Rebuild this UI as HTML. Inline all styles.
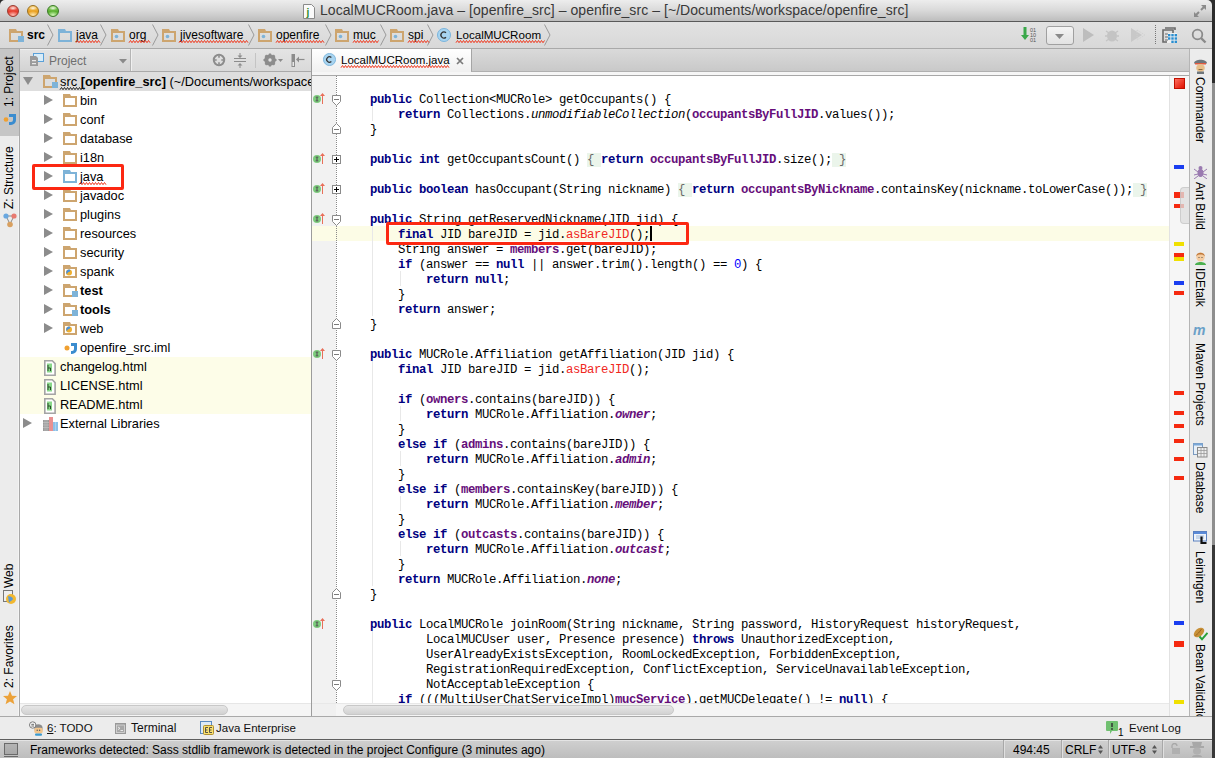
<!DOCTYPE html><html><head><meta charset="utf-8"><style>
*{margin:0;padding:0;box-sizing:border-box}
html,body{width:1215px;height:758px;overflow:hidden;background:#e8e8e8;font-family:"Liberation Sans",sans-serif;font-size:12px;color:#000;position:relative}
.a{position:absolute}
svg{display:block}
#title{left:0;top:0;width:1215px;height:22px;background:linear-gradient(#ededed,#d9d9d9 50%,#bdbdbd);border-bottom:1px solid #5a5a5a}
.tl{position:absolute;top:5px;width:12px;height:12px;border-radius:50%}
#ttext{position:absolute;left:320px;top:2px;font-size:14px;color:#383838;white-space:pre;letter-spacing:0.06px}
#nav{left:0;top:22px;width:1215px;height:27px;background:linear-gradient(#e2e2e2,#d8d8d8);border-bottom:1px solid #a9a9a9}
.nt{position:absolute;top:27px;font-size:12px;line-height:16px;white-space:pre}
.wv{}
.vt{position:absolute;white-space:pre;font-size:12px;line-height:14px;transform-origin:0 0}
.vl{transform:rotate(-90deg)}
.vr{transform:rotate(90deg)}
.tt{position:absolute;white-space:pre;font-size:12.8px;line-height:18px}
.tt.b{font-weight:bold}
.cl{position:absolute;left:58px;height:15px;line-height:15px;font-family:"Liberation Mono",monospace;font-size:12.3px;letter-spacing:-0.38px;white-space:pre;color:#000}
.cl b.k{color:#000080;font-weight:bold}
.cl b.f{color:#660e7a;font-weight:bold}
.cl b.e{color:#660e7a;font-weight:bold;font-style:italic}
.cl .r{color:#f0281e}
.cl .n{color:#0000ff}
.cl .fb{background:#ebf5eb;color:#6a6a6a}
.bt{position:absolute;top:720px;font-size:12px;line-height:16px;white-space:pre;color:#111}
.st{position:absolute;top:742px;font-size:12px;line-height:16px;white-space:pre;color:#000}
.ssep{position:absolute;top:740px;width:1px;height:18px;background:#a8a8a8;box-shadow:1px 0 0 #e0e0e0}
.guide{position:absolute;width:1px;background:#e8e8e8}
.mk{position:absolute;left:1174px;width:10px;height:4px}
</style></head><body>
<div class="a" style="left:0;top:0;width:6px;height:6px;background:#2a2a2a"></div><div class="a" style="left:1206px;top:0;width:6px;height:6px;background:#2a2a2a"></div>
<div id="title" class="a" style="border-radius:5px 5px 0 0;width:1212px">
<div class="tl" style="left:7px;border:1px solid #9a3a30;background:radial-gradient(ellipse 40% 22% at 50% 22%,rgba(255,255,255,0.85),rgba(255,255,255,0) 100%),radial-gradient(ellipse 60% 40% at 50% 90%,#ffc0b8,rgba(255,255,255,0) 100%),linear-gradient(#f07a6a,#e63d2e 55%,#e63d2e)"></div>
<div class="tl" style="left:27px;border:1px solid #9a7020;background:radial-gradient(ellipse 40% 22% at 50% 22%,rgba(255,255,255,0.85),rgba(255,255,255,0) 100%),radial-gradient(ellipse 60% 40% at 50% 90%,#ffe8b0,rgba(255,255,255,0) 100%),linear-gradient(#f5c860,#eaa020 55%,#eaa020)"></div>
<div class="tl" style="left:47px;border:1px solid #3a7a28;background:radial-gradient(ellipse 40% 22% at 50% 22%,rgba(255,255,255,0.85),rgba(255,255,255,0) 100%),radial-gradient(ellipse 60% 40% at 50% 90%,#d0f8b8,rgba(255,255,255,0) 100%),linear-gradient(#9ad870,#5ab030 55%,#5ab030)"></div>
<svg class="a" style="left:303px;top:4px" width="12" height="15"><path d="M0.5 0.5h8l3 3v11h-11z" fill="#fafafa" stroke="#8a8a8a"/><text x="3.5" y="12" font-size="10" font-family="Liberation Sans" font-weight="bold" fill="#2a8a2a">j</text></svg>
<div id="ttext">LocalMUCRoom.java – [openfire_src] – openfire_src – [~/Documents/workspace/openfire_src]</div>
<svg class="a" style="left:1193px;top:4px" width="14" height="14"><path d="M8 1h5v5l-1.8-1.8l-2.5 2.5l-1.4-1.4l2.5-2.5zM6 13h-5v-5l1.8 1.8l2.5-2.5l1.4 1.4l-2.5 2.5z" fill="#8a8a8a"/></svg>
</div>
<div id="nav" class="a"></div>
<div style="position:absolute;left:9px;top:29px;"><svg width="15" height="13" viewBox="0 0 15 13" style="display:block"><path d="M0 0h7l1 2h6v11h-14zM2 4v7h10v-7z" fill="#cda56f" fill-rule="evenodd"/><rect x="9" y="7" width="6" height="6" fill="#7eb3d8"/></svg></div>
<div class="nt" style="left:27px"><b>src</b></div>
<div style="position:absolute;left:47px;top:24px;"><svg width="7" height="22"><path d="M0.5 0.5l5.5 10.5l-5.5 10.5" fill="none" stroke="#9a9a9a" stroke-width="1"/></svg></div>
<div style="position:absolute;left:58px;top:29px;"><svg width="15" height="13" viewBox="0 0 15 13" style="display:block"><path d="M0 0h7l1 2h6v11h-14zM2 4v7h10v-7z" fill="#7eb3d8" fill-rule="evenodd"/></svg></div>
<div class="nt wv" style="left:76px">java</div>
<div style="position:absolute;left:100px;top:24px;"><svg width="7" height="22"><path d="M0.5 0.5l5.5 10.5l-5.5 10.5" fill="none" stroke="#9a9a9a" stroke-width="1"/></svg></div>
<div style="position:absolute;left:111px;top:29px;"><svg width="15" height="13" viewBox="0 0 15 13" style="display:block"><path d="M0 0h7l1 2h6v11h-14zM2 4v7h10v-7z" fill="#cda56f" fill-rule="evenodd"/><circle cx="5.5" cy="7.5" r="1.8" fill="#7eb3d8"/></svg></div>
<div class="nt wv" style="left:129px">org</div>
<div style="position:absolute;left:152px;top:24px;"><svg width="7" height="22"><path d="M0.5 0.5l5.5 10.5l-5.5 10.5" fill="none" stroke="#9a9a9a" stroke-width="1"/></svg></div>
<div style="position:absolute;left:162px;top:29px;"><svg width="15" height="13" viewBox="0 0 15 13" style="display:block"><path d="M0 0h7l1 2h6v11h-14zM2 4v7h10v-7z" fill="#cda56f" fill-rule="evenodd"/><circle cx="5.5" cy="7.5" r="1.8" fill="#7eb3d8"/></svg></div>
<div class="nt wv" style="left:180px">jivesoftware</div>
<div style="position:absolute;left:248px;top:24px;"><svg width="7" height="22"><path d="M0.5 0.5l5.5 10.5l-5.5 10.5" fill="none" stroke="#9a9a9a" stroke-width="1"/></svg></div>
<div style="position:absolute;left:258px;top:29px;"><svg width="15" height="13" viewBox="0 0 15 13" style="display:block"><path d="M0 0h7l1 2h6v11h-14zM2 4v7h10v-7z" fill="#cda56f" fill-rule="evenodd"/><circle cx="5.5" cy="7.5" r="1.8" fill="#7eb3d8"/></svg></div>
<div class="nt wv" style="left:276px">openfire</div>
<div style="position:absolute;left:325px;top:24px;"><svg width="7" height="22"><path d="M0.5 0.5l5.5 10.5l-5.5 10.5" fill="none" stroke="#9a9a9a" stroke-width="1"/></svg></div>
<div style="position:absolute;left:335px;top:29px;"><svg width="15" height="13" viewBox="0 0 15 13" style="display:block"><path d="M0 0h7l1 2h6v11h-14zM2 4v7h10v-7z" fill="#cda56f" fill-rule="evenodd"/><circle cx="5.5" cy="7.5" r="1.8" fill="#7eb3d8"/></svg></div>
<div class="nt wv" style="left:353px">muc</div>
<div style="position:absolute;left:380px;top:24px;"><svg width="7" height="22"><path d="M0.5 0.5l5.5 10.5l-5.5 10.5" fill="none" stroke="#9a9a9a" stroke-width="1"/></svg></div>
<div style="position:absolute;left:390px;top:29px;"><svg width="15" height="13" viewBox="0 0 15 13" style="display:block"><path d="M0 0h7l1 2h6v11h-14zM2 4v7h10v-7z" fill="#cda56f" fill-rule="evenodd"/><circle cx="5.5" cy="7.5" r="1.8" fill="#7eb3d8"/></svg></div>
<div class="nt wv" style="left:408px">spi</div>
<div style="position:absolute;left:427px;top:24px;"><svg width="7" height="22"><path d="M0.5 0.5l5.5 10.5l-5.5 10.5" fill="none" stroke="#9a9a9a" stroke-width="1"/></svg></div>
<div style="position:absolute;left:437px;top:28px;"><svg width="14" height="14" viewBox="0 0 14 14"><circle cx="7" cy="7" r="6.5" fill="#a8d4f0" stroke="#7ab4dc" stroke-width="1"/><path d="M9 4.8a3 3 0 1 0 0 4.4" fill="none" stroke="#333" stroke-width="1.3"/></svg></div>
<div class="nt" style="left:456px;font-size:11.6px">LocalMUCRoom</div>
<div style="position:absolute;left:544px;top:24px;"><svg width="7" height="22"><path d="M0.5 0.5l5.5 10.5l-5.5 10.5" fill="none" stroke="#9a9a9a" stroke-width="1"/></svg></div>
<svg class="a" style="left:76px;top:40px;overflow:visible" width="24" height="3.2"><polyline points="0.00,2.70 1.50,0.50 3.00,2.70 4.50,0.50 6.00,2.70 7.50,0.50 9.00,2.70 10.50,0.50 12.00,2.70 13.50,0.50 15.00,2.70 16.50,0.50 18.00,2.70 19.50,0.50 21.00,2.70 22.50,0.50 24.00,2.70" fill="none" stroke="#f03a20" stroke-width="1"/></svg>
<svg class="a" style="left:129px;top:40px;overflow:visible" width="22" height="3.2"><polyline points="0.00,2.70 1.50,0.50 3.00,2.70 4.50,0.50 6.00,2.70 7.50,0.50 9.00,2.70 10.50,0.50 12.00,2.70 13.50,0.50 15.00,2.70 16.50,0.50 18.00,2.70 19.50,0.50 21.00,2.70" fill="none" stroke="#f03a20" stroke-width="1"/></svg>
<svg class="a" style="left:179px;top:40px;overflow:visible" width="70" height="3.2"><polyline points="0.00,2.70 1.50,0.50 3.00,2.70 4.50,0.50 6.00,2.70 7.50,0.50 9.00,2.70 10.50,0.50 12.00,2.70 13.50,0.50 15.00,2.70 16.50,0.50 18.00,2.70 19.50,0.50 21.00,2.70 22.50,0.50 24.00,2.70 25.50,0.50 27.00,2.70 28.50,0.50 30.00,2.70 31.50,0.50 33.00,2.70 34.50,0.50 36.00,2.70 37.50,0.50 39.00,2.70 40.50,0.50 42.00,2.70 43.50,0.50 45.00,2.70 46.50,0.50 48.00,2.70 49.50,0.50 51.00,2.70 52.50,0.50 54.00,2.70 55.50,0.50 57.00,2.70 58.50,0.50 60.00,2.70 61.50,0.50 63.00,2.70 64.50,0.50 66.00,2.70 67.50,0.50 69.00,2.70" fill="none" stroke="#f03a20" stroke-width="1"/></svg>
<svg class="a" style="left:276px;top:40px;overflow:visible" width="49" height="3.2"><polyline points="0.00,2.70 1.50,0.50 3.00,2.70 4.50,0.50 6.00,2.70 7.50,0.50 9.00,2.70 10.50,0.50 12.00,2.70 13.50,0.50 15.00,2.70 16.50,0.50 18.00,2.70 19.50,0.50 21.00,2.70 22.50,0.50 24.00,2.70 25.50,0.50 27.00,2.70 28.50,0.50 30.00,2.70 31.50,0.50 33.00,2.70 34.50,0.50 36.00,2.70 37.50,0.50 39.00,2.70 40.50,0.50 42.00,2.70 43.50,0.50 45.00,2.70 46.50,0.50 48.00,2.70" fill="none" stroke="#f03a20" stroke-width="1"/></svg>
<svg class="a" style="left:353px;top:40px;overflow:visible" width="26" height="3.2"><polyline points="0.00,2.70 1.50,0.50 3.00,2.70 4.50,0.50 6.00,2.70 7.50,0.50 9.00,2.70 10.50,0.50 12.00,2.70 13.50,0.50 15.00,2.70 16.50,0.50 18.00,2.70 19.50,0.50 21.00,2.70 22.50,0.50 24.00,2.70 25.50,0.50" fill="none" stroke="#f03a20" stroke-width="1"/></svg>
<svg class="a" style="left:408px;top:40px;overflow:visible" width="21" height="3.2"><polyline points="0.00,2.70 1.50,0.50 3.00,2.70 4.50,0.50 6.00,2.70 7.50,0.50 9.00,2.70 10.50,0.50 12.00,2.70 13.50,0.50 15.00,2.70 16.50,0.50 18.00,2.70 19.50,0.50 21.00,2.70" fill="none" stroke="#f03a20" stroke-width="1"/></svg>
<svg class="a" style="left:456px;top:40px;overflow:visible" width="89" height="3.2"><polyline points="0.00,2.70 1.50,0.50 3.00,2.70 4.50,0.50 6.00,2.70 7.50,0.50 9.00,2.70 10.50,0.50 12.00,2.70 13.50,0.50 15.00,2.70 16.50,0.50 18.00,2.70 19.50,0.50 21.00,2.70 22.50,0.50 24.00,2.70 25.50,0.50 27.00,2.70 28.50,0.50 30.00,2.70 31.50,0.50 33.00,2.70 34.50,0.50 36.00,2.70 37.50,0.50 39.00,2.70 40.50,0.50 42.00,2.70 43.50,0.50 45.00,2.70 46.50,0.50 48.00,2.70 49.50,0.50 51.00,2.70 52.50,0.50 54.00,2.70 55.50,0.50 57.00,2.70 58.50,0.50 60.00,2.70 61.50,0.50 63.00,2.70 64.50,0.50 66.00,2.70 67.50,0.50 69.00,2.70 70.50,0.50 72.00,2.70 73.50,0.50 75.00,2.70 76.50,0.50 78.00,2.70 79.50,0.50 81.00,2.70 82.50,0.50 84.00,2.70 85.50,0.50 87.00,2.70 88.50,0.50" fill="none" stroke="#f03a20" stroke-width="1"/></svg>
<div style="position:absolute;left:1021px;top:27px;"><svg width="17" height="16"><path d="M2.5 0h3v8h2.5l-4 5l-4 -5h2.5z" fill="#3aa84a"/><text x="9" y="5" font-size="5.5" font-family="Liberation Sans" fill="#555">01</text><text x="9" y="10" font-size="5.5" font-family="Liberation Sans" fill="#555">10</text><text x="9" y="15" font-size="5.5" font-family="Liberation Sans" fill="#555">01</text></svg></div>
<div class="a" style="left:1046px;top:26px;width:28px;height:19px;border:1px solid #a0a0a0;border-radius:3px;background:linear-gradient(#f4f4f4,#e2e2e2)"><svg class="a" style="left:8px;top:7px" width="9" height="5"><path d="M0 0h9l-4.5 5z" fill="#8a8a8a"/></svg></div>
<div style="position:absolute;left:1083px;top:28px;"><svg width="11" height="14"><path d="M0 0l11 7l-11 7z" fill="#bdbdbd"/></svg></div>
<div style="position:absolute;left:1105px;top:28px;"><svg width="16" height="14"><ellipse cx="7" cy="8" rx="5" ry="5.5" fill="#c4c4c4"/><path d="M1 3l3 2M13 3l-3 2M0 8h2M12 8h2M1 13l3-2M13 13l-3-2" stroke="#c4c4c4" stroke-width="1.3"/></svg></div>
<div style="position:absolute;left:1131px;top:28px;"><svg width="15" height="14"><path d="M0 0l11 7l-11 7z" fill="#c8c8c8"/><path d="M6 2l8 5l-8 5z" fill="none" stroke="#d0d0d0" stroke-dasharray="1 1"/></svg></div>
<div class="a" style="left:1155px;top:25px;width:1px;height:19px;border-left:1px dotted #777"></div>
<div style="position:absolute;left:1162px;top:27px;"><svg width="15" height="16"><path d="M3 1h10v2M1 3h10v12h-10z" fill="none" stroke="#6a6a6a" stroke-width="1.6"/><rect x="5" y="6" width="10" height="10" fill="#f0f0f0"/><g fill="#2a8ed0"><rect x="6" y="7" width="2.4" height="2.4"/><rect x="9.3" y="7" width="2.4" height="2.4"/><rect x="12.6" y="7" width="2.4" height="2.4"/><rect x="6" y="10.3" width="2.4" height="2.4"/><rect x="9.3" y="10.3" width="2.4" height="2.4"/><rect x="12.6" y="10.3" width="2.4" height="2.4"/><rect x="9.3" y="13.6" width="2.4" height="2.4"/><rect x="12.6" y="13.6" width="2.4" height="2.4"/></g><path d="M3 7h3M3 10h3M3 13h3" stroke="#6a6a6a"/></svg></div>
<div style="position:absolute;left:1191px;top:28px;"><svg width="16" height="16"><circle cx="6.5" cy="6.5" r="4.8" fill="none" stroke="#8a8a8a" stroke-width="1.8"/><path d="M10 10l4.5 4.5" stroke="#8a8a8a" stroke-width="2.4"/></svg></div>
<div class="a" style="left:0;top:49px;width:19px;height:667px;background:#ececec"></div>
<div class="a" style="left:19px;top:49px;width:1px;height:667px;background:#a9a9a9"></div>
<div class="a" style="left:18px;top:136px;width:1px;height:580px;background:#f4f4f4"></div>
<div class="a" style="left:0;top:49px;width:19px;height:87px;background:#c6c6c6"></div>
<div class="vt vl" style="left:2px;top:107px">1: Project</div>
<div style="position:absolute;left:3px;top:112px;"><svg width="14" height="14"><circle cx="3" cy="7.5" r="2.3" fill="#f0a030"/><path d="M6 2h7v6a5 5 0 0 1 -5 5h-2v-3h2a2 2 0 0 0 2 -2v-3h-4z" fill="#3a8ccf"/></svg></div>
<div class="vt vl" style="left:2px;top:209px">Z: Structure</div>
<div style="position:absolute;left:3px;top:213px;"><svg width="14" height="15"><path d="M3 3l4 8l4 -8z" fill="none" stroke="#888"/><circle cx="3" cy="3" r="2.6" fill="#6aa8e0"/><circle cx="11" cy="3" r="2.6" fill="#e87a70"/><circle cx="7" cy="11.5" r="2.8" fill="#d8a060"/></svg></div>
<div class="vt vl" style="left:2px;top:588px">Web</div>
<div style="position:absolute;left:3px;top:590px;"><svg width="14" height="15"><rect x="0.5" y="0.5" width="9" height="11" fill="#eee" stroke="#777"/><circle cx="8" cy="9" r="5" fill="#f2b830"/><path d="M5 6c2 1 4 0 5 3c-1 2-3 2-4 4" fill="#5a9ad8"/></svg></div>
<div class="vt vl" style="left:2px;top:688px">2: Favorites</div>
<div style="position:absolute;left:3px;top:691px;"><svg width="14" height="14"><path d="M7 0l2 4.8l5 0.3l-3.9 3.2l1.3 5l-4.4-2.8l-4.4 2.8l1.3-5l-3.9-3.2l5-0.3z" fill="#eca23a"/></svg></div>
<div class="a" style="left:1189px;top:49px;width:1px;height:667px;background:#b5b5b5"></div>
<div class="a" style="left:1190px;top:49px;width:22px;height:667px;background:#ececec"></div>
<div class="a" style="left:1212px;top:0;width:3px;height:83px;background:#2c2c2c"></div>
<div class="a" style="left:1212px;top:83px;width:3px;height:462px;background:#8e8e8e"></div>
<div class="a" style="left:1212px;top:545px;width:3px;height:213px;background:#383838"></div>
<div style="position:absolute;left:1193px;top:59px;"><svg width="15" height="15"><path d="M1 4.5c0-5 13-5 13 0z" fill="#6e767c"/><rect x="2" y="4" width="11" height="1.5" fill="#e05a40"/><ellipse cx="7.5" cy="9" rx="4.3" ry="4" fill="#e8bf8a"/><path d="M4 12.5h7v2.5h-7z" fill="#6e767c"/><path d="M5.5 10.5h4" stroke="#8a6a40"/></svg></div>
<div class="vt vr" style="left:1207px;top:77px;height:14px">Commander</div>
<div style="position:absolute;left:1193px;top:164px;"><svg width="15" height="15"><ellipse cx="7.5" cy="9" rx="3" ry="4" fill="#9a7ab0"/><circle cx="7.5" cy="4" r="2" fill="#9a7ab0"/><path d="M1 5l4 3M14 5l-4 3M1 11l4-1M14 11l-4-1M1 15l4-3M14 15l-4-3" stroke="#9a7ab0"/></svg></div>
<div class="vt vr" style="left:1207px;top:182px;height:14px">Ant Build</div>
<div style="position:absolute;left:1193px;top:250px;"><svg width="15" height="15"><path d="M2 15c0-4 11-4 11 0z" fill="#4cb050"/><ellipse cx="7.5" cy="7" rx="4.2" ry="4.5" fill="#f5cca0"/><path d="M3.2 6.5c0-5 8.6-5 8.6 0c-1-1.5-2-2-4.3-2s-3.3 0.5-4.3 2z" fill="#c07838"/><circle cx="6" cy="7.5" r="0.6" fill="#444"/><circle cx="9" cy="7.5" r="0.6" fill="#444"/></svg></div>
<div class="vt vr" style="left:1207px;top:268px;height:14px">IDEtalk</div>
<div style="position:absolute;left:1193px;top:323px;"><svg width="15" height="15"><text x="0" y="12" font-size="14" font-style="italic" font-weight="bold" font-family="Liberation Sans" fill="#6aa0c8">m</text></svg></div>
<div class="vt vr" style="left:1207px;top:343px;height:14px">Maven Projects</div>
<div style="position:absolute;left:1193px;top:443px;"><svg width="15" height="15"><rect x="0.5" y="0.5" width="9" height="11" fill="#e8f0f8" stroke="#7a9ac0"/><rect x="0.5" y="0.5" width="9" height="2" fill="#7aa8d8"/><rect x="4.5" y="4.5" width="9.5" height="9.5" fill="#eeeeee" stroke="#8a8a8a"/><path d="M5 7.5h9M5 10.5h9M8 5v9M11 5v9" stroke="#9a9a9a" stroke-width="0.8"/></svg></div>
<div class="vt vr" style="left:1207px;top:462px;height:14px">Database</div>
<div style="position:absolute;left:1193px;top:531px;"><svg width="15" height="15"><rect x="0.5" y="0.5" width="13" height="9.5" fill="#eef3fa" stroke="#5a80c0"/><rect x="1" y="1" width="12.5" height="2" fill="#5a8ad8"/><path d="M3 5h8M3 7h8" stroke="#8aa8d0" stroke-width="0.8"/><path d="M8.5 5.5v6.5h5" stroke="#111" stroke-width="2.2" fill="none"/></svg></div>
<div class="vt vr" style="left:1207px;top:551px;height:14px">Leiningen</div>
<div style="position:absolute;left:1193px;top:626px;"><svg width="15" height="15"><ellipse cx="6" cy="6.5" rx="6" ry="3.8" transform="rotate(-40 6 6.5)" fill="#c89038"/><path d="M2.5 9.5c2-1 4-3.5 6-6.5" stroke="#8a5a18" stroke-width="0.8" fill="none"/><path d="M6.5 10.5l2.5 2.8l5.5-6.5" stroke="#28a038" stroke-width="2" fill="none"/></svg></div>
<div class="vt vr" style="left:1207px;top:644px;height:14px">Bean Validation</div>
<div class="a" style="left:20px;top:49px;width:291px;height:22px;background:linear-gradient(#e4e4e4,#d9d9d9)"></div>
<div class="a" style="left:20px;top:49px;width:111px;height:22px;background:linear-gradient(#e4e4e4,#d3d3d3);border-right:1px solid #b5b5b5;box-shadow:1px 0 0 #f0f0f0,inset 0 1px 0 #eeeeee"></div>
<div class="a" style="left:20px;top:71px;width:291px;height:1px;background:#a9a9a9"></div>
<div style="position:absolute;left:30px;top:53px;"><svg width="15" height="14"><rect x="3.5" y="0.5" width="10" height="8" fill="#d8ecf8" stroke="#5aa0d8"/><path d="M0 3h6l2 2v8h-8z" fill="#9a9a9a"/><path d="M2 7h4v1.2h-4zM2 10h4v1.2h-4z" fill="#e8e8e8"/></svg></div>
<div class="a" style="left:49px;top:52.5px;font-size:12px;line-height:16px;color:#6e6e6e">Project</div>
<div style="position:absolute;left:119px;top:59px;"><svg width="8" height="5"><path d="M0 0h8l-4 4.5z" fill="#8a8a8a"/></svg></div>
<div style="position:absolute;left:212px;top:53px;"><svg width="14" height="14"><circle cx="7" cy="7" r="5.2" fill="none" stroke="#8c8c8c" stroke-width="2"/><path d="M7 2.5v2.2M7 9.3v2.2M2.5 7h2.2M9.3 7h2.2" stroke="#8c8c8c" stroke-width="1.6"/></svg></div>
<div style="position:absolute;left:234px;top:53px;"><svg width="12" height="15"><path d="M0 5.5h12M0 8.5h12" stroke="#8c8c8c" stroke-width="1"/><path d="M6 0v4M6 15v-4" stroke="#8c8c8c" stroke-width="1"/><path d="M3.5 2.5l2.5 2.5l2.5-2.5zM3.5 12.5l2.5-2.5l2.5 2.5z" fill="#8c8c8c"/></svg></div>
<div class="a" style="left:255px;top:53px;width:1px;height:15px;background:#c4c4c4"></div>
<div style="position:absolute;left:263px;top:53px;"><svg width="21" height="14"><circle cx="7" cy="7" r="4.3" fill="none" stroke="#8c8c8c" stroke-width="3"/><path d="M7 0.5v13M0.5 7h13M2.4 2.4l9.2 9.2M11.6 2.4l-9.2 9.2" stroke="#8c8c8c" stroke-width="2.2"/><circle cx="7" cy="7" r="1.7" fill="#e2e2e2"/><path d="M15 6h5l-2.5 3z" fill="#8c8c8c"/></svg></div>
<div style="position:absolute;left:291px;top:54px;"><svg width="14" height="13"><rect x="0.5" y="0" width="3.5" height="13" fill="#8c8c8c"/><rect x="1.5" y="8" width="1.5" height="4" fill="#e8e8e8"/><path d="M6.5 5.5h7" stroke="#8c8c8c" stroke-width="1.2"/><path d="M5 5.5l3-3v6z" fill="#8c8c8c"/></svg></div>
<div class="a" style="left:20px;top:72px;width:291px;height:631px;background:#fff"></div>
<div class="a" style="left:20px;top:72px;width:291px;height:19px;background:#dedede"></div>
<div class="a" style="left:20px;top:357px;width:291px;height:57px;background:#fdfde8"></div>
<div class="a" style="left:0;top:0;width:311px;height:703px;overflow:hidden">
<div style="position:absolute;left:23px;top:77px;"><svg width="10" height="8"><path d="M0 0h10l-5 8z" fill="#8c8c8c"/></svg></div><div style="position:absolute;left:43px;top:75px;"><svg width="15" height="13" viewBox="0 0 15 13" style="display:block"><path d="M0 0h7l1 2h6v11h-14zM2 4v7h10v-7z" fill="#cda56f" fill-rule="evenodd"/><rect x="9" y="7" width="6" height="6" fill="#7eb3d8"/></svg></div><div class="tt" style="left:60px;top:73px">src <b>[openfire_src]</b> (~/Documents/workspace/openfire_src)</div><div style="position:absolute;left:44px;top:95px;"><svg width="9" height="10"><path d="M0 0l9 5l-9 5z" fill="#8c8c8c"/></svg></div><div style="position:absolute;left:63px;top:94px;"><svg width="15" height="13" viewBox="0 0 15 13" style="display:block"><path d="M0 0h7l1 2h6v11h-14zM2 4v7h10v-7z" fill="#cda56f" fill-rule="evenodd"/></svg></div><div class="tt" style="left:80px;top:92px">bin</div><div style="position:absolute;left:44px;top:114px;"><svg width="9" height="10"><path d="M0 0l9 5l-9 5z" fill="#8c8c8c"/></svg></div><div style="position:absolute;left:63px;top:113px;"><svg width="15" height="13" viewBox="0 0 15 13" style="display:block"><path d="M0 0h7l1 2h6v11h-14zM2 4v7h10v-7z" fill="#cda56f" fill-rule="evenodd"/></svg></div><div class="tt" style="left:80px;top:111px">conf</div><div style="position:absolute;left:44px;top:133px;"><svg width="9" height="10"><path d="M0 0l9 5l-9 5z" fill="#8c8c8c"/></svg></div><div style="position:absolute;left:63px;top:132px;"><svg width="15" height="13" viewBox="0 0 15 13" style="display:block"><path d="M0 0h7l1 2h6v11h-14zM2 4v7h10v-7z" fill="#cda56f" fill-rule="evenodd"/></svg></div><div class="tt" style="left:80px;top:130px">database</div><div style="position:absolute;left:44px;top:152px;"><svg width="9" height="10"><path d="M0 0l9 5l-9 5z" fill="#8c8c8c"/></svg></div><div style="position:absolute;left:63px;top:151px;"><svg width="15" height="13" viewBox="0 0 15 13" style="display:block"><path d="M0 0h7l1 2h6v11h-14zM2 4v7h10v-7z" fill="#cda56f" fill-rule="evenodd"/></svg></div><div class="tt" style="left:80px;top:149px">i18n</div><div style="position:absolute;left:44px;top:171px;"><svg width="9" height="10"><path d="M0 0l9 5l-9 5z" fill="#8c8c8c"/></svg></div><div style="position:absolute;left:63px;top:170px;"><svg width="15" height="13" viewBox="0 0 15 13" style="display:block"><path d="M0 0h7l1 2h6v11h-14zM2 4v7h10v-7z" fill="#7eb3d8" fill-rule="evenodd"/></svg></div><div class="tt" style="left:80px;top:168px">java</div><div style="position:absolute;left:44px;top:190px;"><svg width="9" height="10"><path d="M0 0l9 5l-9 5z" fill="#8c8c8c"/></svg></div><div style="position:absolute;left:63px;top:189px;"><svg width="15" height="13" viewBox="0 0 15 13" style="display:block"><path d="M0 0h7l1 2h6v11h-14zM2 4v7h10v-7z" fill="#cda56f" fill-rule="evenodd"/></svg></div><div class="tt" style="left:80px;top:187px">javadoc</div><div style="position:absolute;left:44px;top:209px;"><svg width="9" height="10"><path d="M0 0l9 5l-9 5z" fill="#8c8c8c"/></svg></div><div style="position:absolute;left:63px;top:208px;"><svg width="15" height="13" viewBox="0 0 15 13" style="display:block"><path d="M0 0h7l1 2h6v11h-14zM2 4v7h10v-7z" fill="#cda56f" fill-rule="evenodd"/></svg></div><div class="tt" style="left:80px;top:206px">plugins</div><div style="position:absolute;left:44px;top:228px;"><svg width="9" height="10"><path d="M0 0l9 5l-9 5z" fill="#8c8c8c"/></svg></div><div style="position:absolute;left:63px;top:227px;"><svg width="15" height="13" viewBox="0 0 15 13" style="display:block"><path d="M0 0h7l1 2h6v11h-14zM2 4v7h10v-7z" fill="#cda56f" fill-rule="evenodd"/></svg></div><div class="tt" style="left:80px;top:225px">resources</div><div style="position:absolute;left:44px;top:247px;"><svg width="9" height="10"><path d="M0 0l9 5l-9 5z" fill="#8c8c8c"/></svg></div><div style="position:absolute;left:63px;top:246px;"><svg width="15" height="13" viewBox="0 0 15 13" style="display:block"><path d="M0 0h7l1 2h6v11h-14zM2 4v7h10v-7z" fill="#cda56f" fill-rule="evenodd"/></svg></div><div class="tt" style="left:80px;top:244px">security</div><div style="position:absolute;left:44px;top:266px;"><svg width="9" height="10"><path d="M0 0l9 5l-9 5z" fill="#8c8c8c"/></svg></div><div style="position:absolute;left:63px;top:265px;"><svg width="15" height="13" viewBox="0 0 15 13" style="display:block"><path d="M0 0h7l1 2h6v11h-14zM2 4v7h10v-7z" fill="#cda56f" fill-rule="evenodd"/><circle cx="6" cy="7.5" r="3" fill="#f0b030"/><path d="M3.2 7c0.3-2 2.2-3 3.8-2.3c0.8 0.8 0 2-1.2 2.4c-1 0.4-1.6 1.2-1.8 2.3c-0.6-0.6-0.9-1.4-0.8-2.4z" fill="#4a90d8"/></svg></div><div class="tt" style="left:80px;top:263px">spank</div><div style="position:absolute;left:44px;top:285px;"><svg width="9" height="10"><path d="M0 0l9 5l-9 5z" fill="#8c8c8c"/></svg></div><div style="position:absolute;left:63px;top:284px;"><svg width="15" height="13" viewBox="0 0 15 13" style="display:block"><path d="M0 0h7l1 2h6v11h-14zM2 4v7h10v-7z" fill="#cda56f" fill-rule="evenodd"/><rect x="9" y="7" width="6" height="6" fill="#7eb3d8"/></svg></div><div class="tt b" style="left:80px;top:282px">test</div><div style="position:absolute;left:44px;top:304px;"><svg width="9" height="10"><path d="M0 0l9 5l-9 5z" fill="#8c8c8c"/></svg></div><div style="position:absolute;left:63px;top:303px;"><svg width="15" height="13" viewBox="0 0 15 13" style="display:block"><path d="M0 0h7l1 2h6v11h-14zM2 4v7h10v-7z" fill="#cda56f" fill-rule="evenodd"/><rect x="9" y="7" width="6" height="6" fill="#7eb3d8"/></svg></div><div class="tt b" style="left:80px;top:301px">tools</div><div style="position:absolute;left:44px;top:323px;"><svg width="9" height="10"><path d="M0 0l9 5l-9 5z" fill="#8c8c8c"/></svg></div><div style="position:absolute;left:63px;top:322px;"><svg width="15" height="13" viewBox="0 0 15 13" style="display:block"><path d="M0 0h7l1 2h6v11h-14zM2 4v7h10v-7z" fill="#cda56f" fill-rule="evenodd"/><circle cx="6" cy="7.5" r="3" fill="#f0b030"/><path d="M3.2 7c0.3-2 2.2-3 3.8-2.3c0.8 0.8 0 2-1.2 2.4c-1 0.4-1.6 1.2-1.8 2.3c-0.6-0.6-0.9-1.4-0.8-2.4z" fill="#4a90d8"/></svg></div><div class="tt" style="left:80px;top:320px">web</div><div style="position:absolute;left:64px;top:341px;"><svg width="14" height="14" style="display:block"><circle cx="3" cy="7" r="2.5" fill="#f0a030"/><path d="M7 2h6v6a5 5 0 0 1 -5 5h-1v-3h1a2 2 0 0 0 2 -2v-3h-3z" fill="#3a8ccf"/></svg></div><div class="tt" style="left:80px;top:339px">openfire_src.iml</div><div style="position:absolute;left:44px;top:360px;"><svg width="12" height="16" style="display:block"><path d="M0.8 0.8h7.5l2.8 2.8v11.6h-10.3z" fill="#fff" stroke="#a4a4a4" stroke-width="1.6"/><rect x="3" y="3.5" width="5" height="9" fill="#8ad88a"/><path d="M4 5v6M4 8h2.5v3" fill="none" stroke="#2a4a2a" stroke-width="1"/></svg></div><div class="tt" style="left:60px;top:358px">changelog.html</div><div style="position:absolute;left:44px;top:379px;"><svg width="12" height="16" style="display:block"><path d="M0.8 0.8h7.5l2.8 2.8v11.6h-10.3z" fill="#fff" stroke="#a4a4a4" stroke-width="1.6"/><rect x="3" y="3.5" width="5" height="9" fill="#8ad88a"/><path d="M4 5v6M4 8h2.5v3" fill="none" stroke="#2a4a2a" stroke-width="1"/></svg></div><div class="tt" style="left:60px;top:377px">LICENSE.html</div><div style="position:absolute;left:44px;top:398px;"><svg width="12" height="16" style="display:block"><path d="M0.8 0.8h7.5l2.8 2.8v11.6h-10.3z" fill="#fff" stroke="#a4a4a4" stroke-width="1.6"/><rect x="3" y="3.5" width="5" height="9" fill="#8ad88a"/><path d="M4 5v6M4 8h2.5v3" fill="none" stroke="#2a4a2a" stroke-width="1"/></svg></div><div class="tt" style="left:60px;top:396px">README.html</div><div style="position:absolute;left:23px;top:418px;"><svg width="9" height="10"><path d="M0 0l9 5l-9 5z" fill="#8c8c8c"/></svg></div><div style="position:absolute;left:43px;top:417px;"><svg width="15" height="14" style="display:block"><rect x="0" y="3" width="6" height="11" fill="#9a9a9a"/><path d="M0 5.5h6M0 8h6M0 10.5h6M2 3v11M4 3v11" stroke="#c8c8c8" stroke-width="0.6"/><rect x="6" y="0" width="4" height="14" fill="#e89090"/><rect x="10" y="5" width="5" height="9" fill="#8cc0e8"/><path d="M12.5 5v9" stroke="#c0dcf0" stroke-width="0.6"/></svg></div><div class="tt" style="left:60px;top:415px">External Libraries</div>
</div>
<div class="a" style="left:32px;top:164px;width:92px;height:26px;border:3px solid #fc2812;border-radius:2px"></div>
<svg class="a" style="left:60px;top:87px;overflow:visible" width="25" height="3.2"><polyline points="0.00,2.70 1.50,0.50 3.00,2.70 4.50,0.50 6.00,2.70 7.50,0.50 9.00,2.70 10.50,0.50 12.00,2.70 13.50,0.50 15.00,2.70 16.50,0.50 18.00,2.70 19.50,0.50 21.00,2.70 22.50,0.50 24.00,2.70" fill="none" stroke="#222" stroke-width="1"/></svg>
<svg class="a" style="left:79px;top:182px;overflow:visible" width="27" height="3.2"><polyline points="0.00,2.70 1.50,0.50 3.00,2.70 4.50,0.50 6.00,2.70 7.50,0.50 9.00,2.70 10.50,0.50 12.00,2.70 13.50,0.50 15.00,2.70 16.50,0.50 18.00,2.70 19.50,0.50 21.00,2.70 22.50,0.50 24.00,2.70 25.50,0.50 27.00,2.70" fill="none" stroke="#f03a20" stroke-width="1"/></svg>
<div class="a" style="left:20px;top:703px;width:291px;height:13px;background:#f5f5f5;border-top:1px solid #e6e6e6"></div>
<div class="a" style="left:21px;top:705px;width:207px;height:10px;border-radius:5px;background:linear-gradient(#e6e6e6,#d2d2d2);border:1px solid #c8c8c8"></div>
<div class="a" style="left:311px;top:49px;width:1px;height:667px;background:#9c9c9c"></div>
<div class="a" style="left:312px;top:49px;width:877px;height:27px;background:#f6f6f6"></div>
<div class="a" style="left:471px;top:49px;width:718px;height:23px;background:linear-gradient(#dadada,#c9c9c9);border-left:1px solid #a5a5a5;border-bottom:1px solid #b0b0b0"></div>
<div class="a" style="left:312px;top:49px;width:159px;height:23px;background:linear-gradient(#ffffff,#f0f0f0)"></div>
<div class="a" style="left:312px;top:75px;width:877px;height:1px;background:#a8a8a8"></div>
<div style="position:absolute;left:323px;top:53px;"><svg width="13" height="13" viewBox="0 0 14 14"><circle cx="7" cy="7" r="6.5" fill="#a8d4f0" stroke="#7ab4dc" stroke-width="1"/><path d="M9 4.8a3 3 0 1 0 0 4.4" fill="none" stroke="#333" stroke-width="1.3"/></svg></div>
<div class="a" style="left:341px;top:52px;font-size:11.5px;line-height:16px">LocalMUCRoom.java</div>
<svg class="a" style="left:341px;top:65px;overflow:visible" width="109" height="3.2"><polyline points="0.00,2.70 1.50,0.50 3.00,2.70 4.50,0.50 6.00,2.70 7.50,0.50 9.00,2.70 10.50,0.50 12.00,2.70 13.50,0.50 15.00,2.70 16.50,0.50 18.00,2.70 19.50,0.50 21.00,2.70 22.50,0.50 24.00,2.70 25.50,0.50 27.00,2.70 28.50,0.50 30.00,2.70 31.50,0.50 33.00,2.70 34.50,0.50 36.00,2.70 37.50,0.50 39.00,2.70 40.50,0.50 42.00,2.70 43.50,0.50 45.00,2.70 46.50,0.50 48.00,2.70 49.50,0.50 51.00,2.70 52.50,0.50 54.00,2.70 55.50,0.50 57.00,2.70 58.50,0.50 60.00,2.70 61.50,0.50 63.00,2.70 64.50,0.50 66.00,2.70 67.50,0.50 69.00,2.70 70.50,0.50 72.00,2.70 73.50,0.50 75.00,2.70 76.50,0.50 78.00,2.70 79.50,0.50 81.00,2.70 82.50,0.50 84.00,2.70 85.50,0.50 87.00,2.70 88.50,0.50 90.00,2.70 91.50,0.50 93.00,2.70 94.50,0.50 96.00,2.70 97.50,0.50 99.00,2.70 100.50,0.50 102.00,2.70 103.50,0.50 105.00,2.70 106.50,0.50 108.00,2.70" fill="none" stroke="#f03a20" stroke-width="1"/></svg>
<div style="position:absolute;left:456px;top:57px;"><svg width="8" height="8"><path d="M1 1l6 6M7 1l-6 6" stroke="#7a7a7a" stroke-width="1.7"/></svg></div>
<div class="a" style="left:312px;top:76px;width:857px;height:627px;background:#fff;overflow:hidden">
<div class="a" style="left:0;top:0;width:24px;height:627px;background:#f2f2f2"></div>
<div class="a" style="left:0;top:150px;width:857px;height:15px;background:#fcfce6"></div>
<div class="guide" style="left:60px;top:30px;height:15px"></div>
<div class="guide" style="left:60px;top:150px;height:90px"></div>
<div class="guide" style="left:60px;top:285px;height:225px"></div>
<div class="guide" style="left:60px;top:555px;height:72px"></div>
<div class="guide" style="left:88px;top:195px;height:15px"></div>
<div class="guide" style="left:88px;top:330px;height:15px"></div>
<div class="guide" style="left:88px;top:375px;height:15px"></div>
<div class="guide" style="left:88px;top:420px;height:15px"></div>
<div class="guide" style="left:88px;top:465px;height:15px"></div>
<div class="a" style="left:24px;top:0;width:1px;height:627px;border-left:1px dotted #8a8a8a"></div>
<div class="cl" style="top:2px"></div><div class="cl" style="top:17px"><b class="k">public</b> Collection&lt;MUCRole&gt; getOccupants() {</div><div class="cl" style="top:32px">    <b class="k">return</b> Collections.<i>unmodifiableCollection</i>(<b class="f">occupantsByFullJID</b>.values());</div><div class="cl" style="top:47px">}</div><div class="cl" style="top:62px"></div><div class="cl" style="top:77px"><b class="k">public</b> <b class="k">int</b> getOccupantsCount() <span class="fb">{ </span><b class="k">return</b> <b class="f">occupantsByFullJID</b>.size();<span class="fb"> }</span></div><div class="cl" style="top:92px"></div><div class="cl" style="top:107px"><b class="k">public</b> <b class="k">boolean</b> hasOccupant(String nickname) <span class="fb">{ </span><b class="k">return</b> <b class="f">occupantsByNickname</b>.containsKey(nickname.toLowerCase());<span class="fb"> }</span></div><div class="cl" style="top:122px"></div><div class="cl" style="top:137px"><b class="k">public</b> String getReservedNickname(JID jid) {</div><div class="cl" style="top:152px">    <b class="k">final</b> JID bareJID = jid.<span class="r">asBareJID</span>();</div><div class="cl" style="top:167px">    String answer = <b class="f">members</b>.get(bareJID);</div><div class="cl" style="top:182px">    <b class="k">if</b> (answer == <b class="k">null</b> || answer.trim().length() == <span class="n">0</span>) {</div><div class="cl" style="top:197px">        <b class="k">return</b> <b class="k">null</b>;</div><div class="cl" style="top:212px">    }</div><div class="cl" style="top:227px">    <b class="k">return</b> answer;</div><div class="cl" style="top:242px">}</div><div class="cl" style="top:257px"></div><div class="cl" style="top:272px"><b class="k">public</b> MUCRole.Affiliation getAffiliation(JID jid) {</div><div class="cl" style="top:287px">    <b class="k">final</b> JID bareJID = jid.<span class="r">asBareJID</span>();</div><div class="cl" style="top:302px"></div><div class="cl" style="top:317px">    <b class="k">if</b> (<b class="f">owners</b>.contains(bareJID)) {</div><div class="cl" style="top:332px">        <b class="k">return</b> MUCRole.Affiliation.<b class="e">owner</b>;</div><div class="cl" style="top:347px">    }</div><div class="cl" style="top:362px">    <b class="k">else if</b> (<b class="f">admins</b>.contains(bareJID)) {</div><div class="cl" style="top:377px">        <b class="k">return</b> MUCRole.Affiliation.<b class="e">admin</b>;</div><div class="cl" style="top:392px">    }</div><div class="cl" style="top:407px">    <b class="k">else if</b> (<b class="f">members</b>.containsKey(bareJID)) {</div><div class="cl" style="top:422px">        <b class="k">return</b> MUCRole.Affiliation.<b class="e">member</b>;</div><div class="cl" style="top:437px">    }</div><div class="cl" style="top:452px">    <b class="k">else if</b> (<b class="f">outcasts</b>.contains(bareJID)) {</div><div class="cl" style="top:467px">        <b class="k">return</b> MUCRole.Affiliation.<b class="e">outcast</b>;</div><div class="cl" style="top:482px">    }</div><div class="cl" style="top:497px">    <b class="k">return</b> MUCRole.Affiliation.<b class="e">none</b>;</div><div class="cl" style="top:512px">}</div><div class="cl" style="top:527px"></div><div class="cl" style="top:542px"><b class="k">public</b> LocalMUCRole joinRoom(String nickname, String password, HistoryRequest historyRequest,</div><div class="cl" style="top:557px">        LocalMUCUser user, Presence presence) <b class="k">throws</b> UnauthorizedException,</div><div class="cl" style="top:572px">        UserAlreadyExistsException, RoomLockedException, ForbiddenException,</div><div class="cl" style="top:587px">        RegistrationRequiredException, ConflictException, ServiceUnavailableException,</div><div class="cl" style="top:602px">        NotAcceptableException {</div><div class="cl" style="top:617px">    <b class="k">if</b> (((MultiUserChatServiceImpl)<b class="f">mucService</b>).getMUCDelegate() != <b class="k">null</b>) {</div>
<div class="a" style="left:338px;top:150px;width:2px;height:15px;background:#000"></div>
</div>
<div style="position:absolute;left:313px;top:94px;"><svg width="14" height="13" style="overflow:visible"><circle cx="4" cy="5" r="4" fill="#7ccb7c"/><path d="M2.6 3.1h2.8M2.6 6.9h2.8" stroke="#555" stroke-width="0.9"/><path d="M4 3.1v3.8" stroke="#555" stroke-width="1.1"/><path d="M9.5 -1l-2.5 3h2v8h1v-8h2z" fill="#e8705a"/></svg></div>
<div style="position:absolute;left:313px;top:154px;"><svg width="14" height="13" style="overflow:visible"><circle cx="4" cy="5" r="4" fill="#7ccb7c"/><path d="M2.6 3.1h2.8M2.6 6.9h2.8" stroke="#555" stroke-width="0.9"/><path d="M4 3.1v3.8" stroke="#555" stroke-width="1.1"/><path d="M9.5 -1l-2.5 3h2v8h1v-8h2z" fill="#e8705a"/></svg></div>
<div style="position:absolute;left:313px;top:184px;"><svg width="14" height="13" style="overflow:visible"><circle cx="4" cy="5" r="4" fill="#7ccb7c"/><path d="M2.6 3.1h2.8M2.6 6.9h2.8" stroke="#555" stroke-width="0.9"/><path d="M4 3.1v3.8" stroke="#555" stroke-width="1.1"/><path d="M9.5 -1l-2.5 3h2v8h1v-8h2z" fill="#e8705a"/></svg></div>
<div style="position:absolute;left:313px;top:214px;"><svg width="14" height="13" style="overflow:visible"><circle cx="4" cy="5" r="4" fill="#7ccb7c"/><path d="M2.6 3.1h2.8M2.6 6.9h2.8" stroke="#555" stroke-width="0.9"/><path d="M4 3.1v3.8" stroke="#555" stroke-width="1.1"/><path d="M9.5 -1l-2.5 3h2v8h1v-8h2z" fill="#e8705a"/></svg></div>
<div style="position:absolute;left:313px;top:349px;"><svg width="14" height="13" style="overflow:visible"><circle cx="4" cy="5" r="4" fill="#7ccb7c"/><path d="M2.6 3.1h2.8M2.6 6.9h2.8" stroke="#555" stroke-width="0.9"/><path d="M4 3.1v3.8" stroke="#555" stroke-width="1.1"/><path d="M9.5 -1l-2.5 3h2v8h1v-8h2z" fill="#e8705a"/></svg></div>
<div style="position:absolute;left:313px;top:619px;"><svg width="14" height="13" style="overflow:visible"><circle cx="4" cy="5" r="4" fill="#7ccb7c"/><path d="M2.6 3.1h2.8M2.6 6.9h2.8" stroke="#555" stroke-width="0.9"/><path d="M4 3.1v3.8" stroke="#555" stroke-width="1.1"/><path d="M9.5 -1l-2.5 3h2v8h1v-8h2z" fill="#e8705a"/></svg></div>
<div style="position:absolute;left:332px;top:95px;"><svg width="9" height="11"><path d="M0.5 0.5h8v6l-4 4l-4 -4z" fill="#fff" stroke="#8a8a8a"/><path d="M2 4.5h5" stroke="#7a7a7a"/></svg></div>
<div style="position:absolute;left:332px;top:123px;"><svg width="9" height="11"><path d="M0.5 10.5h8v-6l-4 -4l-4 4z" fill="#fff" stroke="#8a8a8a"/><path d="M2 6.5h5" stroke="#7a7a7a"/></svg></div>
<div style="position:absolute;left:332px;top:155px;"><svg width="9" height="9"><rect x="0.5" y="0.5" width="8" height="8" fill="#fff" stroke="#8a8a8a"/><path d="M2 4.5h5M4.5 2v5" stroke="#000" stroke-width="1"/></svg></div>
<div style="position:absolute;left:332px;top:185px;"><svg width="9" height="9"><rect x="0.5" y="0.5" width="8" height="8" fill="#fff" stroke="#8a8a8a"/><path d="M2 4.5h5M4.5 2v5" stroke="#000" stroke-width="1"/></svg></div>
<div style="position:absolute;left:332px;top:215px;"><svg width="9" height="11"><path d="M0.5 0.5h8v6l-4 4l-4 -4z" fill="#fff" stroke="#8a8a8a"/><path d="M2 4.5h5" stroke="#7a7a7a"/></svg></div>
<div style="position:absolute;left:332px;top:318px;"><svg width="9" height="11"><path d="M0.5 10.5h8v-6l-4 -4l-4 4z" fill="#fff" stroke="#8a8a8a"/><path d="M2 6.5h5" stroke="#7a7a7a"/></svg></div>
<div style="position:absolute;left:332px;top:350px;"><svg width="9" height="11"><path d="M0.5 0.5h8v6l-4 4l-4 -4z" fill="#fff" stroke="#8a8a8a"/><path d="M2 4.5h5" stroke="#7a7a7a"/></svg></div>
<div style="position:absolute;left:332px;top:588px;"><svg width="9" height="11"><path d="M0.5 10.5h8v-6l-4 -4l-4 4z" fill="#fff" stroke="#8a8a8a"/><path d="M2 6.5h5" stroke="#7a7a7a"/></svg></div>
<div style="position:absolute;left:332px;top:680px;"><svg width="9" height="11"><path d="M0.5 0.5h8v6l-4 4l-4 -4z" fill="#fff" stroke="#8a8a8a"/><path d="M2 4.5h5" stroke="#7a7a7a"/></svg></div>
<div class="a" style="left:386px;top:222px;width:303px;height:23px;border:3px solid #fc2812;border-radius:2px"></div>
<div class="a" style="left:312px;top:703px;width:857px;height:13px;background:#f5f5f5;border-top:1px solid #e8e8e8"></div>
<div class="a" style="left:312px;top:704px;width:24px;height:12px;background:#f0f0f0"></div>
<div class="a" style="left:343px;top:705px;width:331px;height:10px;border-radius:5px;background:linear-gradient(#e6e6e6,#d2d2d2);border:1px solid #c8c8c8"></div>
<div class="a" style="left:1169px;top:76px;width:20px;height:640px;background:#f6f6f6;border-left:1px solid #e2e2e2"></div>
<div class="a" style="left:1174px;top:78px;width:11px;height:11px;background:linear-gradient(135deg,#ff7060,#e01000);border:1px solid #c01000"></div>
<div class="mk" style="top:165px;background:#1a3ef0"></div>
<div class="mk" style="top:204px;background:#f52a10"></div>
<div class="mk" style="top:242px;background:#f0e000"></div>
<div class="mk" style="top:253px;background:#f52a10"></div>
<div class="mk" style="top:257px;background:#f0e000"></div>
<div class="mk" style="top:281px;background:#1a3ef0"></div>
<div class="mk" style="top:291px;background:#f52a10"></div>
<div class="mk" style="top:391px;background:#f52a10"></div>
<div class="mk" style="top:411px;background:#f52a10"></div>
<div class="mk" style="top:424px;background:#f52a10"></div>
<div class="mk" style="top:439px;background:#f52a10"></div>
<div class="mk" style="top:457px;background:#f52a10"></div>
<div class="mk" style="top:476px;background:#f52a10"></div>
<div class="mk" style="top:621px;background:#1a3ef0"></div>
<div class="mk" style="top:700px;background:#f0e000"></div>
<div class="mk" style="top:641px;height:6px;background:#f52a10"></div>
<div class="mk" style="top:192px;height:6px;background:#f52a10"></div>
<div class="a" style="left:1180px;top:187px;width:9px;height:37px;border-radius:4px 0 0 4px;background:rgba(222,222,222,0.78);border:1px solid rgba(190,190,190,0.6);border-right:none"></div>
<div class="a" style="left:0;top:716px;width:1212px;height:23px;background:#ececec;border-top:1px solid #a9a9a9"></div>
<div style="position:absolute;left:29px;top:721px;"><svg width="15" height="15"><path d="M5.5 5.5c0-3 8-3.5 8 1v3h-8z" fill="#8c8c8c"/><rect x="5.3" y="6.8" width="8.4" height="5.8" rx="2" fill="#f4c68c"/><circle cx="8.2" cy="9.3" r="0.7" fill="#555"/><circle cx="10.6" cy="9.3" r="0.7" fill="#555"/><rect x="6" y="12.4" width="7" height="2.4" rx="1" fill="#3a9ad0"/><circle cx="3.7" cy="4" r="3.2" fill="#fff" stroke="#7a7a7a" stroke-width="1"/><path d="M2.3 3.3h2.8M2.3 5h2.8" stroke="#555" stroke-width="0.9"/></svg></div>
<div class="bt" style="left:47px;font-size:11.5px"><u>6</u>: TODO</div>
<div style="position:absolute;left:115px;top:723px;"><svg width="11" height="11"><rect x="0" y="0" width="11" height="11" fill="#999"/><rect x="1.5" y="2" width="8" height="7.5" fill="#a8a8a8" stroke="#dadada" stroke-width="0.8"/><path d="M3 4l2 1.3l-2 1.3M5.5 7.5h2.5" stroke="#f0f0f0" fill="none" stroke-width="0.9"/></svg></div>
<div class="bt" style="left:131px">Terminal</div>
<div style="position:absolute;left:200px;top:720px;"><svg width="14" height="15"><rect x="0.5" y="1.5" width="11" height="12" fill="#dceaf6" stroke="#5a8ac0"/><rect x="3.5" y="5.5" width="10" height="9" rx="1" fill="#f8e070" stroke="#b09030"/><path d="M8 7.5h-2.5v5h2.5M5.5 10h2M12 7.5h-2.5v5h2.5M9.5 10h2" fill="none" stroke="#444" stroke-width="0.9"/></svg></div>
<div class="bt" style="left:216px;font-size:11.5px">Java Enterprise</div>
<div style="position:absolute;left:1106px;top:721px;"><svg width="13" height="13"><path d="M1 0h10a1 1 0 0 1 1 1v8a1 1 0 0 1 -1 1h-5l-2 3v-3h-3a1 1 0 0 1 -1 -1v-8a1 1 0 0 1 1 -1z" fill="#70c070"/><path d="M6 2v4" stroke="#333" stroke-width="1.5"/><circle cx="6" cy="8" r="0.9" fill="#333"/></svg></div>
<div class="a" style="left:1118px;top:727px;font-size:10px;line-height:11px">1</div>
<div class="bt" style="left:1129px;font-size:11.5px">Event Log</div>
<div class="a" style="left:0;top:739px;width:1212px;height:19px;background:linear-gradient(#d0d0d0,#bdbdbd);border-top:1px solid #5e5e5e;box-shadow:inset 0 1px 0 #e4e4e4"></div>
<div class="a" style="left:4px;top:743px;width:14px;height:12px;background:linear-gradient(#b4b4b4,#a8a8a8);border:1px solid #6a6a6a"></div>
<div class="a" style="left:4px;top:756px;width:14px;height:1px;background:#6a6a6a"></div>
<div class="st" style="left:30px">Frameworks detected: Sass stdlib framework is detected in the project Configure (3 minutes ago)</div>
<div class="ssep" style="left:1003px"></div>
<div class="ssep" style="left:1061px"></div>
<div class="ssep" style="left:1108px"></div>
<div class="ssep" style="left:1162px"></div>
<div class="st" style="left:1013px">494:45</div>
<div class="st" style="left:1065px">CRLF</div>
<div class="st" style="left:1112px">UTF-8</div>
<div style="position:absolute;left:1098px;top:745px;"><svg width="5" height="9"><path d="M0 3.5l2.5-3.5l2.5 3.5zM0 5.5l2.5 3.5l2.5-3.5z" fill="#555"/></svg></div>
<div style="position:absolute;left:1152px;top:745px;"><svg width="5" height="9"><path d="M0 3.5l2.5-3.5l2.5 3.5zM0 5.5l2.5 3.5l2.5-3.5z" fill="#555"/></svg></div>
<div style="position:absolute;left:1170px;top:743px;"><svg width="11" height="12"><path d="M2 5v-2a2.5 2.5 0 0 1 5 0" fill="none" stroke="#a8a8a8" stroke-width="1.3"/><rect x="2" y="5" width="8" height="6" fill="#b0b0b0"/></svg></div>
<div style="position:absolute;left:1190px;top:741px;"><svg width="14" height="16"><path d="M3 5h8l1-4h-10z" fill="#a8a8a8"/><rect x="0" y="5" width="14" height="2" fill="#a8a8a8"/><ellipse cx="7" cy="10" rx="4" ry="3.5" fill="#b0b0b0"/><path d="M2 16c0-3 10-3 10 0z" fill="#a8a8a8"/></svg></div>
</body></html>
